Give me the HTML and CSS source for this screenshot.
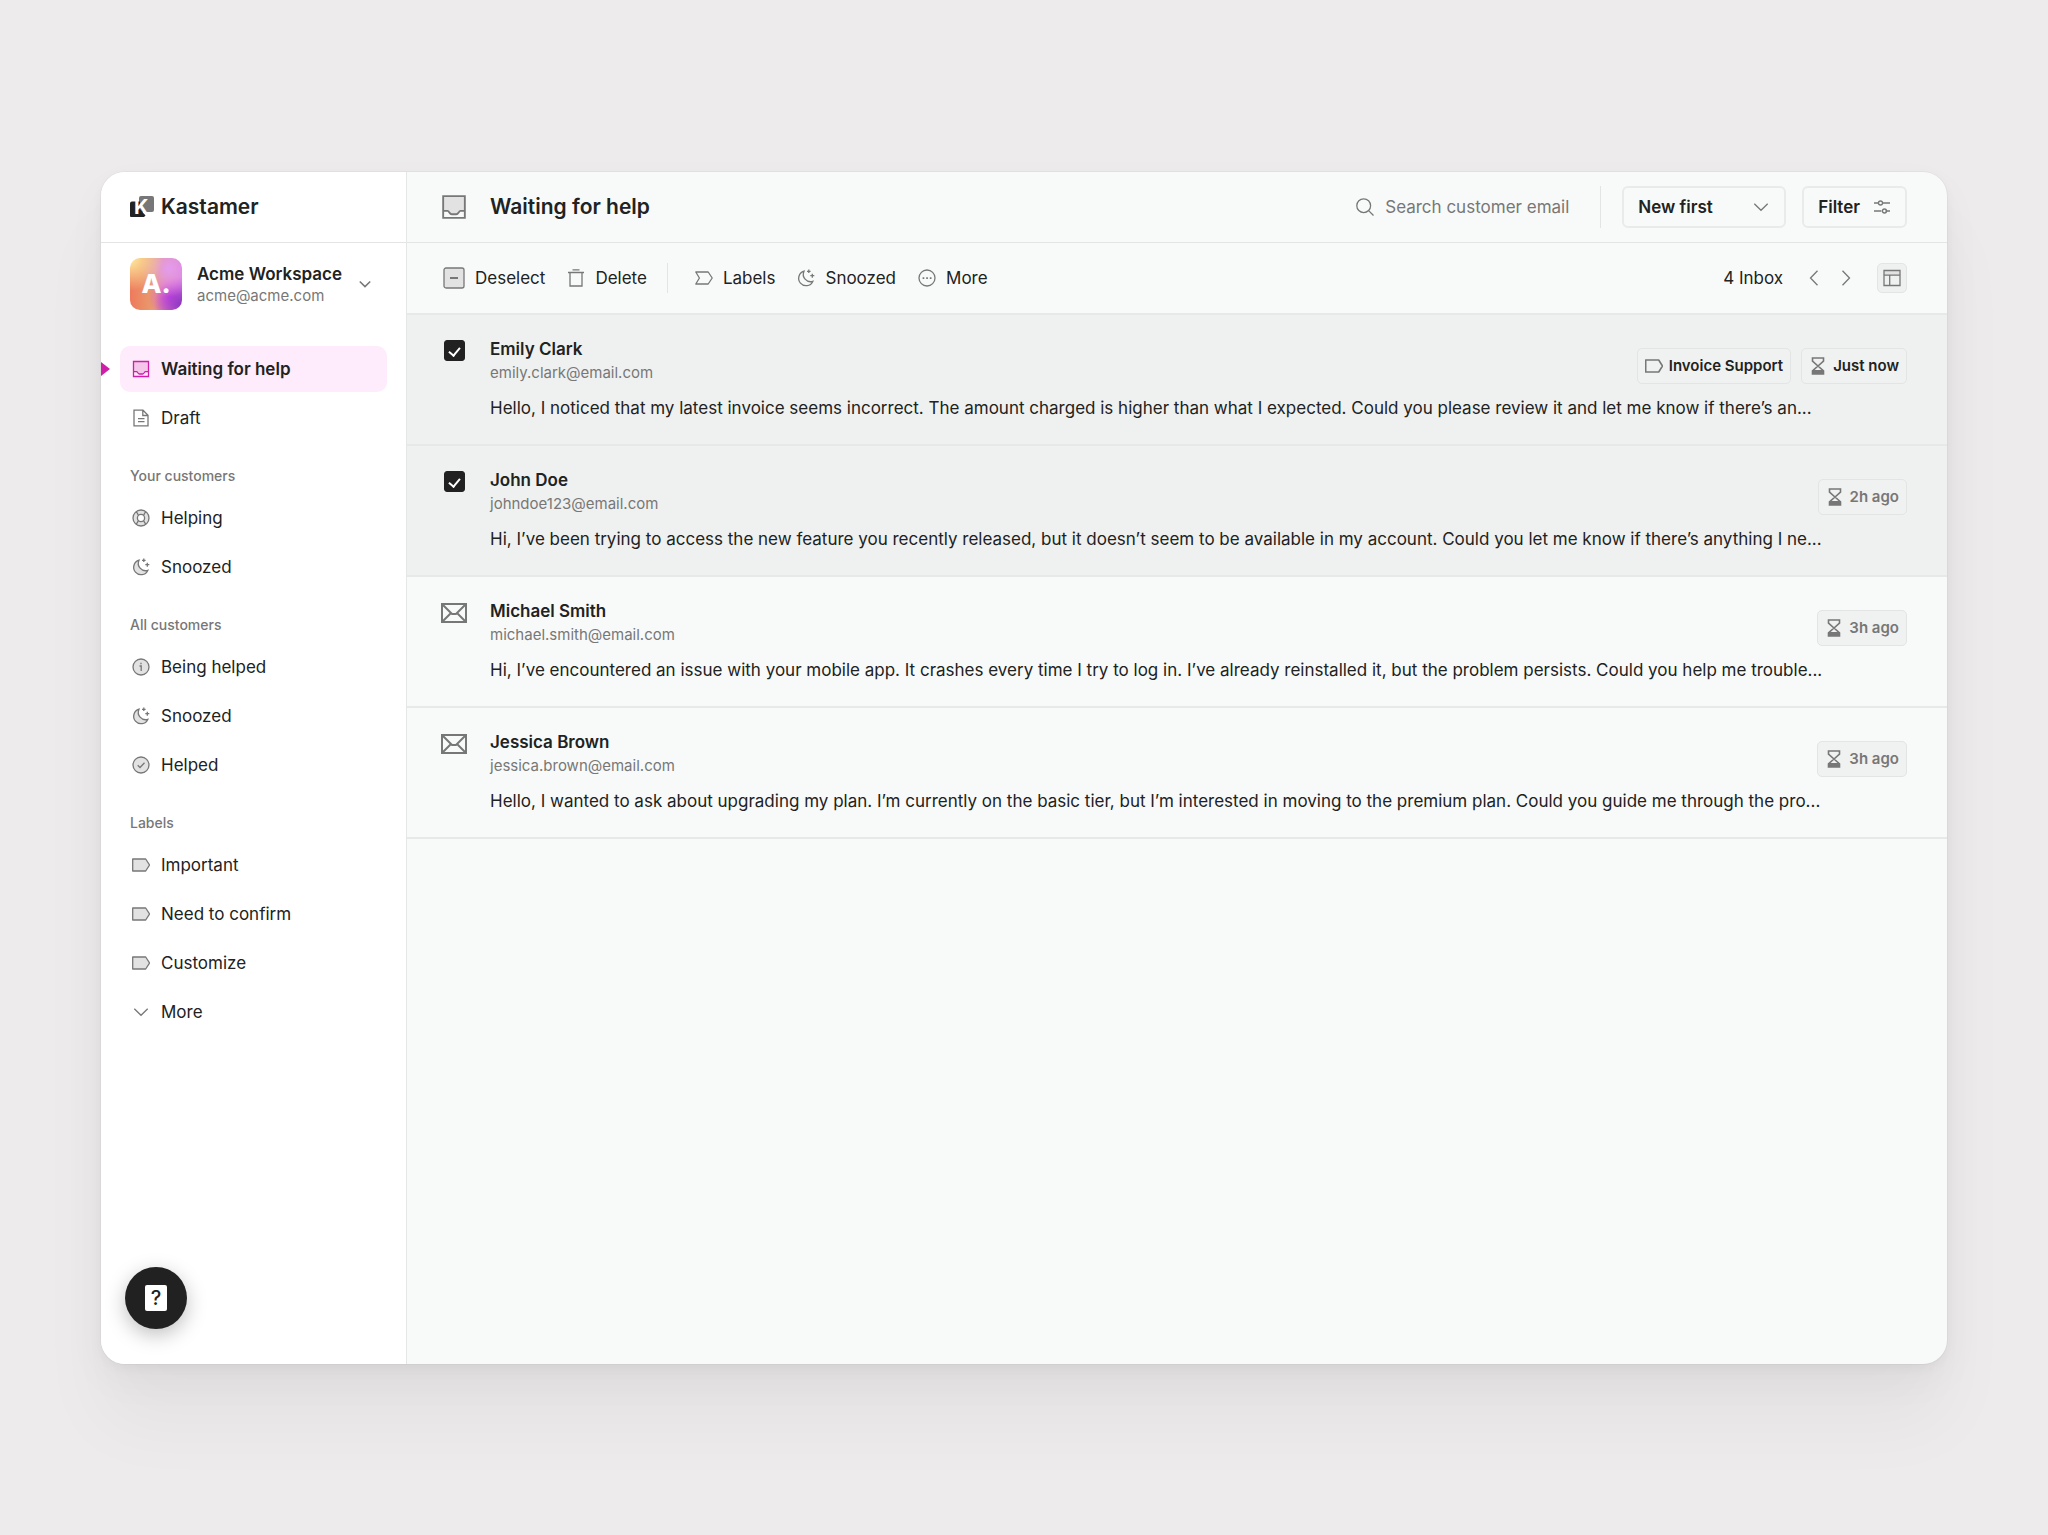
FILE: index.html
```html
<!DOCTYPE html>
<html lang="en">
<head>
    <meta charset="UTF-8">
    <meta name="viewport" content="width=device-width, initial-scale=1.0">
    <title>Kastamer - Waiting for help</title>
    <link rel="stylesheet" href="styles.css">
</head>
<body>
    <!-- Shared icons -->
    <svg class="sprite" aria-hidden="true">
        <symbol id="i-inbox" viewBox="0 0 18 18">
            <path class="tint" d="M1.5 1.5h15v10.2h-4.2c-.6 2-1.7 2.6-3.3 2.6s-2.7-.6-3.3-2.6H1.5z"/>
            <path d="M1.5 1.5h15v15h-15zM1.5 11.700h3c1.300 0 1.300 2.300 3 2.300h3c1.700 0 1.700-2.300 3-2.300h3"/>
        </symbol>
        <symbol id="i-draft" viewBox="0 0 18 18">
            <path d="M2 1.200h9l5 5v10.600H2zM10.800 1.500v5h5M6 9.700h6.500M6 12.700h6.500"/>
        </symbol>
        <symbol id="i-buoy" viewBox="0 0 18 18">
            <circle class="tint" cx="9" cy="9" r="8"/>
            <circle cx="9" cy="9" r="8"/>
            <circle class="hole" cx="9" cy="9" r="3.6"/>
            <path d="M4 2.800c1.500 1.200 1.800 2 2.300 3.400M14 2.800c-1.500 1.200-1.800 2-2.300 3.400M4 15.200c1.500-1.200 1.800-2 2.300-3.400M14 15.200c-1.500-1.200-1.800-2-2.300-3.400"/>
        </symbol>
        <symbol id="i-moon" viewBox="0 0 18 18">
            <path class="tint" d="M7 2.200a7.400 7.400 0 1 0 8.800 10.200A7.400 7.400 0 0 1 7 2.200z"/>
            <path d="M7 2.200a7.400 7.400 0 1 0 8.800 10.200A7.400 7.400 0 0 1 7 2.200zM11.800.5v3.600M10 2.300h3.600M15.300 4.700v4M13.300 6.700h4"/>
        </symbol>
        <symbol id="i-info" viewBox="0 0 18 18">
            <circle class="tint" cx="9" cy="9" r="8"/>
            <circle cx="9" cy="9" r="8"/>
            <path d="M7.500 8H9.200v5M9 4.700v1.500"/>
        </symbol>
        <symbol id="i-check" viewBox="0 0 18 18">
            <circle class="tint" cx="9" cy="9" r="8"/>
            <circle cx="9" cy="9" r="8"/>
            <path d="M5.700 9.300l2.300 2.200 4.500-4.700"/>
        </symbol>
        <symbol id="i-tag" viewBox="0 0 18 18">
            <path class="tint" d="M.7 3h13l3.800 6-3.800 6H.7z"/>
            <path stroke-linejoin="round" d="M.7 3h13l3.800 6-3.800 6H.7z"/>
        </symbol>
        <symbol id="i-label" viewBox="0 0 18 18">
            <path stroke-linejoin="round" d="M.8 3h12.400l4 6-4 6H.8l3.600-6z"/>
        </symbol>
        <symbol id="i-down" viewBox="0 0 18 18">
            <path d="M2.300 5.700L9 12.300l6.700-6.600"/>
        </symbol>
        <symbol id="i-left" viewBox="0 0 18 18">
            <path d="M12.500 1.700L5.500 9l7 7.300"/>
        </symbol>
        <symbol id="i-right" viewBox="0 0 18 18">
            <path d="M5.500 1.700l7 7.300-7 7.300"/>
        </symbol>
        <symbol id="i-trash" viewBox="0 0 18 18">
            <path d="M3 4v13h12V4M1 3.500h16M5.500.8h7"/>
        </symbol>
        <symbol id="i-more" viewBox="0 0 18 18">
            <circle cx="9" cy="9" r="8"/>
            <path class="solid" d="M4.600 8.200h1.700v1.700H4.600zM8.200 8.200h1.700v1.700H8.200zM11.800 8.200h1.700v1.700h-1.700z"/>
        </symbol>
        <symbol id="i-deselect" viewBox="0 0 22 22">
            <rect class="tint" x="1" y="1" width="20" height="20" rx="2"/>
            <rect x="1" y="1" width="20" height="20" rx="2"/>
            <path stroke-width="2" d="M7 11h8"/>
        </symbol>
        <symbol id="i-search" viewBox="0 0 18 18">
            <circle cx="7.700" cy="7.700" r="6.900"/>
            <path d="M12.600 12.600l4.900 4.900"/>
        </symbol>
        <symbol id="i-sliders" viewBox="0 0 18 18">
            <path d="M1 5h4.500M9.500 5H17M1 13h7.500M12.500 13H17"/>
            <circle cx="7.500" cy="5" r="2"/>
            <circle cx="11.500" cy="13" r="2"/>
        </symbol>
        <symbol id="i-layout" viewBox="0 0 18 18">
            <path class="tint" d="M1 1.500h16v4.700H1z"/>
            <path d="M1 1.500h16v15H1zM1 6.200h16M6.700 6.200v10.300"/>
        </symbol>
        <symbol id="i-hourglass" viewBox="0 0 18 18">
            <path d="M3.500 1h11v3.200L9 9 3.500 4.200zM3.500 17v-3.200L9 9l5.500 4.800V17z"/>
            <path class="solid" d="M3.500 13h11v4h-11z"/>
        </symbol>
        <symbol id="i-mail" viewBox="0 0 26 20">
            <path d="M1 1h24v18H1z"/>
            <path d="M1.500 1.500L11 11h4l9.500-9.500M1.500 18.500l8.500-8.500M24.500 18.500L16 10"/>
        </symbol>
    </svg>

    <div class="app">
        <aside class="sidebar">
            <a class="brand" href="#">
                <svg class="brand-mark" viewBox="0 0 24 22" aria-hidden="true">
                    <rect class="brand-back" x="9" width="15" height="16" rx="2"/>
                    <path class="brand-front" d="M0 7.500a2 2 0 0 1 2-2h8V13l5.500 6.500-1.500 1.500H1a1 1 0 0 1-1-1z"/>
                    <text class="brand-letter" x="4" y="18">K</text>
                </svg>
                <span>Kastamer</span>
            </a>

            <button class="workspace" type="button">
                <span class="avatar">A.</span>
                <span class="workspace-text">
                    <span class="workspace-name">Acme Workspace</span>
                    <span class="workspace-email">acme@acme.com</span>
                </span>
                <svg class="icon small"><use href="#i-down"/></svg>
            </button>

            <nav class="menu">
                <a class="menu-item active" href="#"><svg class="icon"><use href="#i-inbox"/></svg>Waiting for help</a>
                <a class="menu-item" href="#"><svg class="icon"><use href="#i-draft"/></svg>Draft</a>

                <h2>Your customers</h2>
                <a class="menu-item" href="#"><svg class="icon"><use href="#i-buoy"/></svg>Helping</a>
                <a class="menu-item" href="#"><svg class="icon"><use href="#i-moon"/></svg>Snoozed</a>

                <h2>All customers</h2>
                <a class="menu-item" href="#"><svg class="icon"><use href="#i-info"/></svg>Being helped</a>
                <a class="menu-item" href="#"><svg class="icon"><use href="#i-moon"/></svg>Snoozed</a>
                <a class="menu-item" href="#"><svg class="icon"><use href="#i-check"/></svg>Helped</a>

                <h2>Labels</h2>
                <a class="menu-item" href="#"><svg class="icon"><use href="#i-tag"/></svg>Important</a>
                <a class="menu-item" href="#"><svg class="icon"><use href="#i-tag"/></svg>Need to confirm</a>
                <a class="menu-item" href="#"><svg class="icon"><use href="#i-tag"/></svg>Customize</a>
                <a class="menu-item" href="#"><svg class="icon"><use href="#i-down"/></svg>More</a>
            </nav>

            <button class="help" type="button" aria-label="Help"><span>?</span></button>
        </aside>

        <main class="content">
            <header class="topbar">
                <svg class="icon large"><use href="#i-inbox"/></svg>
                <h1>Waiting for help</h1>
                <label class="search">
                    <svg class="icon"><use href="#i-search"/></svg>
                    <input type="search" placeholder="Search customer email" aria-label="Search customer email">
                </label>
                <div class="sort">
                    <select aria-label="Sort order">
                        <option>New first</option>
                        <option>Old first</option>
                    </select>
                    <svg class="icon"><use href="#i-down"/></svg>
                </div>
                <button class="filter" type="button">Filter<svg class="icon"><use href="#i-sliders"/></svg></button>
            </header>

            <div class="toolbar">
                <div class="actions">
                    <button type="button"><svg class="icon medium"><use href="#i-deselect"/></svg>Deselect</button>
                    <button type="button"><svg class="icon"><use href="#i-trash"/></svg>Delete</button>
                </div>
                <div class="actions plain">
                    <button type="button"><svg class="icon"><use href="#i-label"/></svg>Labels</button>
                    <button type="button"><svg class="icon"><use href="#i-moon"/></svg>Snoozed</button>
                    <button type="button"><svg class="icon"><use href="#i-more"/></svg>More</button>
                </div>
                <div class="pager">
                    <span>4 Inbox</span>
                    <button type="button" aria-label="Previous"><svg class="icon"><use href="#i-left"/></svg></button>
                    <button type="button" aria-label="Next"><svg class="icon"><use href="#i-right"/></svg></button>
                    <button class="layout" type="button" aria-label="Layout"><svg class="icon"><use href="#i-layout"/></svg></button>
                </div>
            </div>

            <ul class="messages">
                <li class="message selected">
                    <div class="mark"><input type="checkbox" aria-label="Select Emily Clark" checked></div>
                    <div class="message-body">
                        <div class="message-head">
                            <div>
                                <h3>Emily Clark</h3>
                                <a href="#">emily.clark@email.com</a>
                            </div>
                            <div class="badges">
                                <span class="badge strong"><svg class="icon"><use href="#i-tag"/></svg>Invoice Support</span>
                                <span class="badge strong"><svg class="icon"><use href="#i-hourglass"/></svg>Just now</span>
                            </div>
                        </div>
                        <p>Hello, I noticed that my latest invoice seems incorrect. The amount charged is higher than what I expected. Could you please review it and let me know if there’s an...</p>
                    </div>
                </li>
                <li class="message selected">
                    <div class="mark"><input type="checkbox" aria-label="Select John Doe" checked></div>
                    <div class="message-body">
                        <div class="message-head">
                            <div>
                                <h3>John Doe</h3>
                                <a href="#">johndoe123@email.com</a>
                            </div>
                            <div class="badges">
                                <span class="badge"><svg class="icon"><use href="#i-hourglass"/></svg>2h ago</span>
                            </div>
                        </div>
                        <p>Hi, I’ve been trying to access the new feature you recently released, but it doesn’t seem to be available in my account. Could you let me know if there’s anything I ne...</p>
                    </div>
                </li>
                <li class="message">
                    <div class="mark"><svg class="icon mail"><use href="#i-mail"/></svg></div>
                    <div class="message-body">
                        <div class="message-head">
                            <div>
                                <h3>Michael Smith</h3>
                                <a href="#">michael.smith@email.com</a>
                            </div>
                            <div class="badges">
                                <span class="badge"><svg class="icon"><use href="#i-hourglass"/></svg>3h ago</span>
                            </div>
                        </div>
                        <p>Hi, I’ve encountered an issue with your mobile app. It crashes every time I try to log in. I’ve already reinstalled it, but the problem persists. Could you help me trouble...</p>
                    </div>
                </li>
                <li class="message">
                    <div class="mark"><svg class="icon mail"><use href="#i-mail"/></svg></div>
                    <div class="message-body">
                        <div class="message-head">
                            <div>
                                <h3>Jessica Brown</h3>
                                <a href="#">jessica.brown@email.com</a>
                            </div>
                            <div class="badges">
                                <span class="badge"><svg class="icon"><use href="#i-hourglass"/></svg>3h ago</span>
                            </div>
                        </div>
                        <p>Hello, I wanted to ask about upgrading my plan. I’m currently on the basic tier, but I’m interested in moving to the premium plan. Could you guide me through the pro...</p>
                    </div>
                </li>
            </ul>
        </main>
    </div>
</body>
</html>
```
FILE: styles.css
```css
* {
    box-sizing: border-box;
}

body {
    margin: 0;
    padding: 172px 101px 171px;
    min-height: 100vh;
    display: flex;
    background-color: #eeebec;
    color: #212222;
    font-family: Inter, "Liberation Sans", sans-serif;
    font-size: 17px;
    line-height: 24px;
}

h1,
h2,
h3,
p,
ul {
    margin: 0;
    padding: 0;
}

a {
    color: inherit;
    text-decoration: none;
}

button,
input,
select {
    margin: 0;
    padding: 0;
    border: none;
    background: none;
    color: inherit;
    font: inherit;
}

button {
    cursor: pointer;
}

/* Icons */
.sprite {
    display: none;
}

.icon {
    width: 18px;
    height: 18px;
    flex-shrink: 0;
    fill: none;
    stroke: #777777;
    stroke-width: 1.3;
    --tint: #e2e2e2;
    --hole: #ffffff;
}

.icon.small {
    width: 14px;
    height: 14px;
    stroke-width: 2;
}

.icon.medium {
    width: 22px;
    height: 22px;
}

.icon.large {
    width: 26px;
    height: 26px;
}

.icon.mail {
    width: 26px;
    height: 20px;
    stroke-width: 2;
}

.tint {
    fill: var(--tint);
    stroke: none;
}

.hole {
    fill: var(--hole);
}

.solid {
    fill: #777777;
    stroke: none;
}

/* Window */
.app {
    flex: 1;
    min-width: 0;
    display: flex;
    border-radius: 24px;
    overflow: hidden;
    background-color: #f8faf9;
    box-shadow:
        0 0 0 1px rgba(0, 0, 0, 0.03),
        0 4px 12px rgba(0, 0, 0, 0.04),
        0 16px 40px rgba(0, 0, 0, 0.04),
        0 60px 72px rgba(0, 0, 0, 0.04);
}

.sidebar {
    width: 306px;
    flex-shrink: 0;
    display: flex;
    flex-direction: column;
    align-items: flex-start;
    padding-bottom: 35px;
    background-color: #ffffff;
    border-right: 1px solid #e5e6e6;
}

.brand {
    align-self: stretch;
    height: 71px;
    display: flex;
    align-items: center;
    gap: 7px;
    padding-left: 29px;
    border-bottom: 1px solid #e3e4e4;
    font-size: 21px;
    font-weight: 600;
}

.brand-mark {
    width: 24px;
    height: 22px;
}

.brand-back {
    fill: #777777;
}

.brand-front {
    fill: #212222;
}

.brand-letter {
    fill: #ffffff;
    font-size: 20px;
    font-weight: 700;
}

.workspace {
    align-self: stretch;
    display: flex;
    align-items: center;
    gap: 15px;
    padding: 15px 34px 15px 29px;
    text-align: left;
}

.avatar {
    width: 52px;
    height: 52px;
    flex-shrink: 0;
    display: flex;
    align-items: center;
    justify-content: center;
    border-radius: 10px;
    background:
        radial-gradient(circle at 0 0, #fff0a0 0, rgba(255, 220, 150, 0) 45%),
        radial-gradient(circle at 75% 20%, #e49bee 0, rgba(228, 155, 238, 0) 50%),
        radial-gradient(circle at 100% 90%, #8a35c0 0, rgba(170, 60, 210, 0) 40%),
        radial-gradient(circle at 78% 75%, #dd4bf0 0, rgba(221, 75, 240, 0) 40%),
        linear-gradient(90deg, #ee7a5c, #e8a070 50%, #dd80dd);
    color: #ffffff;
    font-size: 26px;
    font-weight: 800;
}

.workspace-text {
    flex: 1;
    display: flex;
    flex-direction: column;
    white-space: nowrap;
}

.workspace-name {
    font-weight: 600;
}

.workspace-email {
    color: #777777;
    font-size: 15px;
    line-height: 20px;
}

.menu {
    align-self: stretch;
    display: flex;
    flex-direction: column;
    gap: 3px;
    padding: 21px 19px;
}

.menu h2 {
    padding: 22px 10px 6px;
    color: #777777;
    font-size: 14px;
    font-weight: 500;
    line-height: 20px;
}

.menu-item {
    position: relative;
    height: 46px;
    display: flex;
    align-items: center;
    gap: 11px;
    padding: 0 12px;
    border-radius: 10px;
}

.menu-item.active {
    background-color: #feebfb;
    font-weight: 600;
}

.menu-item.active .icon {
    stroke: #cf1fa8;
    --tint: #f4c6ea;
}

/* Arrow on the window edge beside the open section */
.menu-item.active::before {
    content: "";
    position: absolute;
    left: -19px;
    border: 7px solid transparent;
    border-left: 9px solid #cf1fa8;
    border-right: none;
}

.help {
    width: 62px;
    height: 62px;
    display: flex;
    align-items: center;
    justify-content: center;
    margin-top: auto;
    margin-left: 24px;
    border-radius: 50%;
    background-color: #212121;
    box-shadow: 0 6px 20px rgba(0, 0, 0, 0.25);
}

.help span {
    width: 22px;
    height: 26px;
    border-radius: 2px;
    background-color: #ffffff;
    font-size: 20px;
    font-weight: 500;
    line-height: 26px;
}

/* Top bar */
.content {
    flex: 1;
    min-width: 0;
}

.topbar {
    height: 71px;
    display: flex;
    align-items: center;
    padding: 0 40px 0 34px;
    border-bottom: 1px solid #e3e4e4;
}

.topbar h1 {
    margin-left: 23px;
    font-size: 21px;
    font-weight: 600;
}

.search {
    height: 42px;
    display: flex;
    align-items: center;
    gap: 11px;
    margin-left: auto;
    border-right: 1px solid #e3e4e4;
}

.search input {
    width: 215px;
    outline: none;
}

.search input::placeholder {
    color: #777777;
    opacity: 1;
}

.sort {
    width: 164px;
    margin: 0 16px 0 21px;
    display: grid;
    align-items: center;
}

.sort select,
.sort .icon {
    grid-area: 1 / 1;
}

.sort select {
    width: 100%;
    appearance: none;
    padding-left: 14px;
}

.sort .icon {
    justify-self: end;
    margin-right: 16px;
    pointer-events: none;
}

.sort select,
.filter {
    height: 42px;
    border: 2px solid #e9eaea;
    border-radius: 6px;
    font-weight: 600;
}

.filter {
    display: flex;
    align-items: center;
    gap: 13px;
    padding: 0 14px;
}

/* Toolbar */
.toolbar {
    height: 72px;
    display: flex;
    align-items: center;
    padding: 0 40px 0 36px;
    border-bottom: 2px solid #e7e8e8;
}

.toolbar button {
    display: flex;
    align-items: center;
    gap: 10px;
}

.actions {
    height: 30px;
    display: flex;
    align-items: center;
    gap: 22px;
    padding-right: 20px;
}

.actions.plain {
    padding-left: 27px;
    border-left: 1px solid #e3e4e4;
}

.actions.plain .icon {
    --tint: none;
}

.pager {
    display: flex;
    align-items: center;
    gap: 14px;
    margin-left: auto;
}

.pager span {
    margin-right: 8px;
}

.pager .layout {
    width: 30px;
    height: 30px;
    justify-content: center;
    margin-left: 8px;
    border: 1px solid #e3e4e4;
    border-radius: 5px;
    background-color: #eff1f1;
}

/* Messages */
.messages {
    list-style: none;
}

.message {
    display: flex;
    gap: 23px;
    padding: 22px 40px 24px 34px;
    border-bottom: 2px solid #e7e8e8;
}

.message.selected {
    background-color: #eff1f0;
}

.mark {
    width: 26px;
    height: 27px;
    display: flex;
    align-items: center;
    justify-content: center;
    flex-shrink: 0;
}

.mark input {
    width: 21px;
    height: 21px;
    display: flex;
    justify-content: center;
    appearance: none;
    border: 1px solid #777777;
    border-radius: 3px;
}

.mark input:checked {
    border-color: #212121;
    background-color: #212121;
}

.mark input:checked::before {
    content: "";
    width: 5px;
    height: 9px;
    margin-top: 4px;
    border: solid #ffffff;
    border-width: 0 2px 2px 0;
    transform: rotate(40deg);
}

.message-body {
    flex: 1;
    min-width: 0;
}

.message-head {
    height: 47px;
    display: flex;
    justify-content: space-between;
    margin-bottom: 12px;
}

.message h3 {
    margin-bottom: 2px;
    font-size: 17px;
    font-weight: 600;
}

.message-head a {
    display: block;
    color: #777777;
    font-size: 15px;
    line-height: 20px;
}

.message p {
    overflow: hidden;
    white-space: nowrap;
    text-overflow: ellipsis;
}

.badges {
    display: flex;
    gap: 10px;
    padding-top: 11px;
}

.badge {
    height: 36px;
    display: flex;
    align-items: center;
    gap: 6px;
    padding: 0 7px;
    border: 1px solid #e3e4e4;
    border-radius: 5px;
    background-color: #f0f1f1;
    color: #777777;
    font-size: 15px;
    font-weight: 600;
}

.badge.strong {
    color: #212222;
}

.badge .icon {
    stroke-width: 1.6;
    --tint: none;
}
```
